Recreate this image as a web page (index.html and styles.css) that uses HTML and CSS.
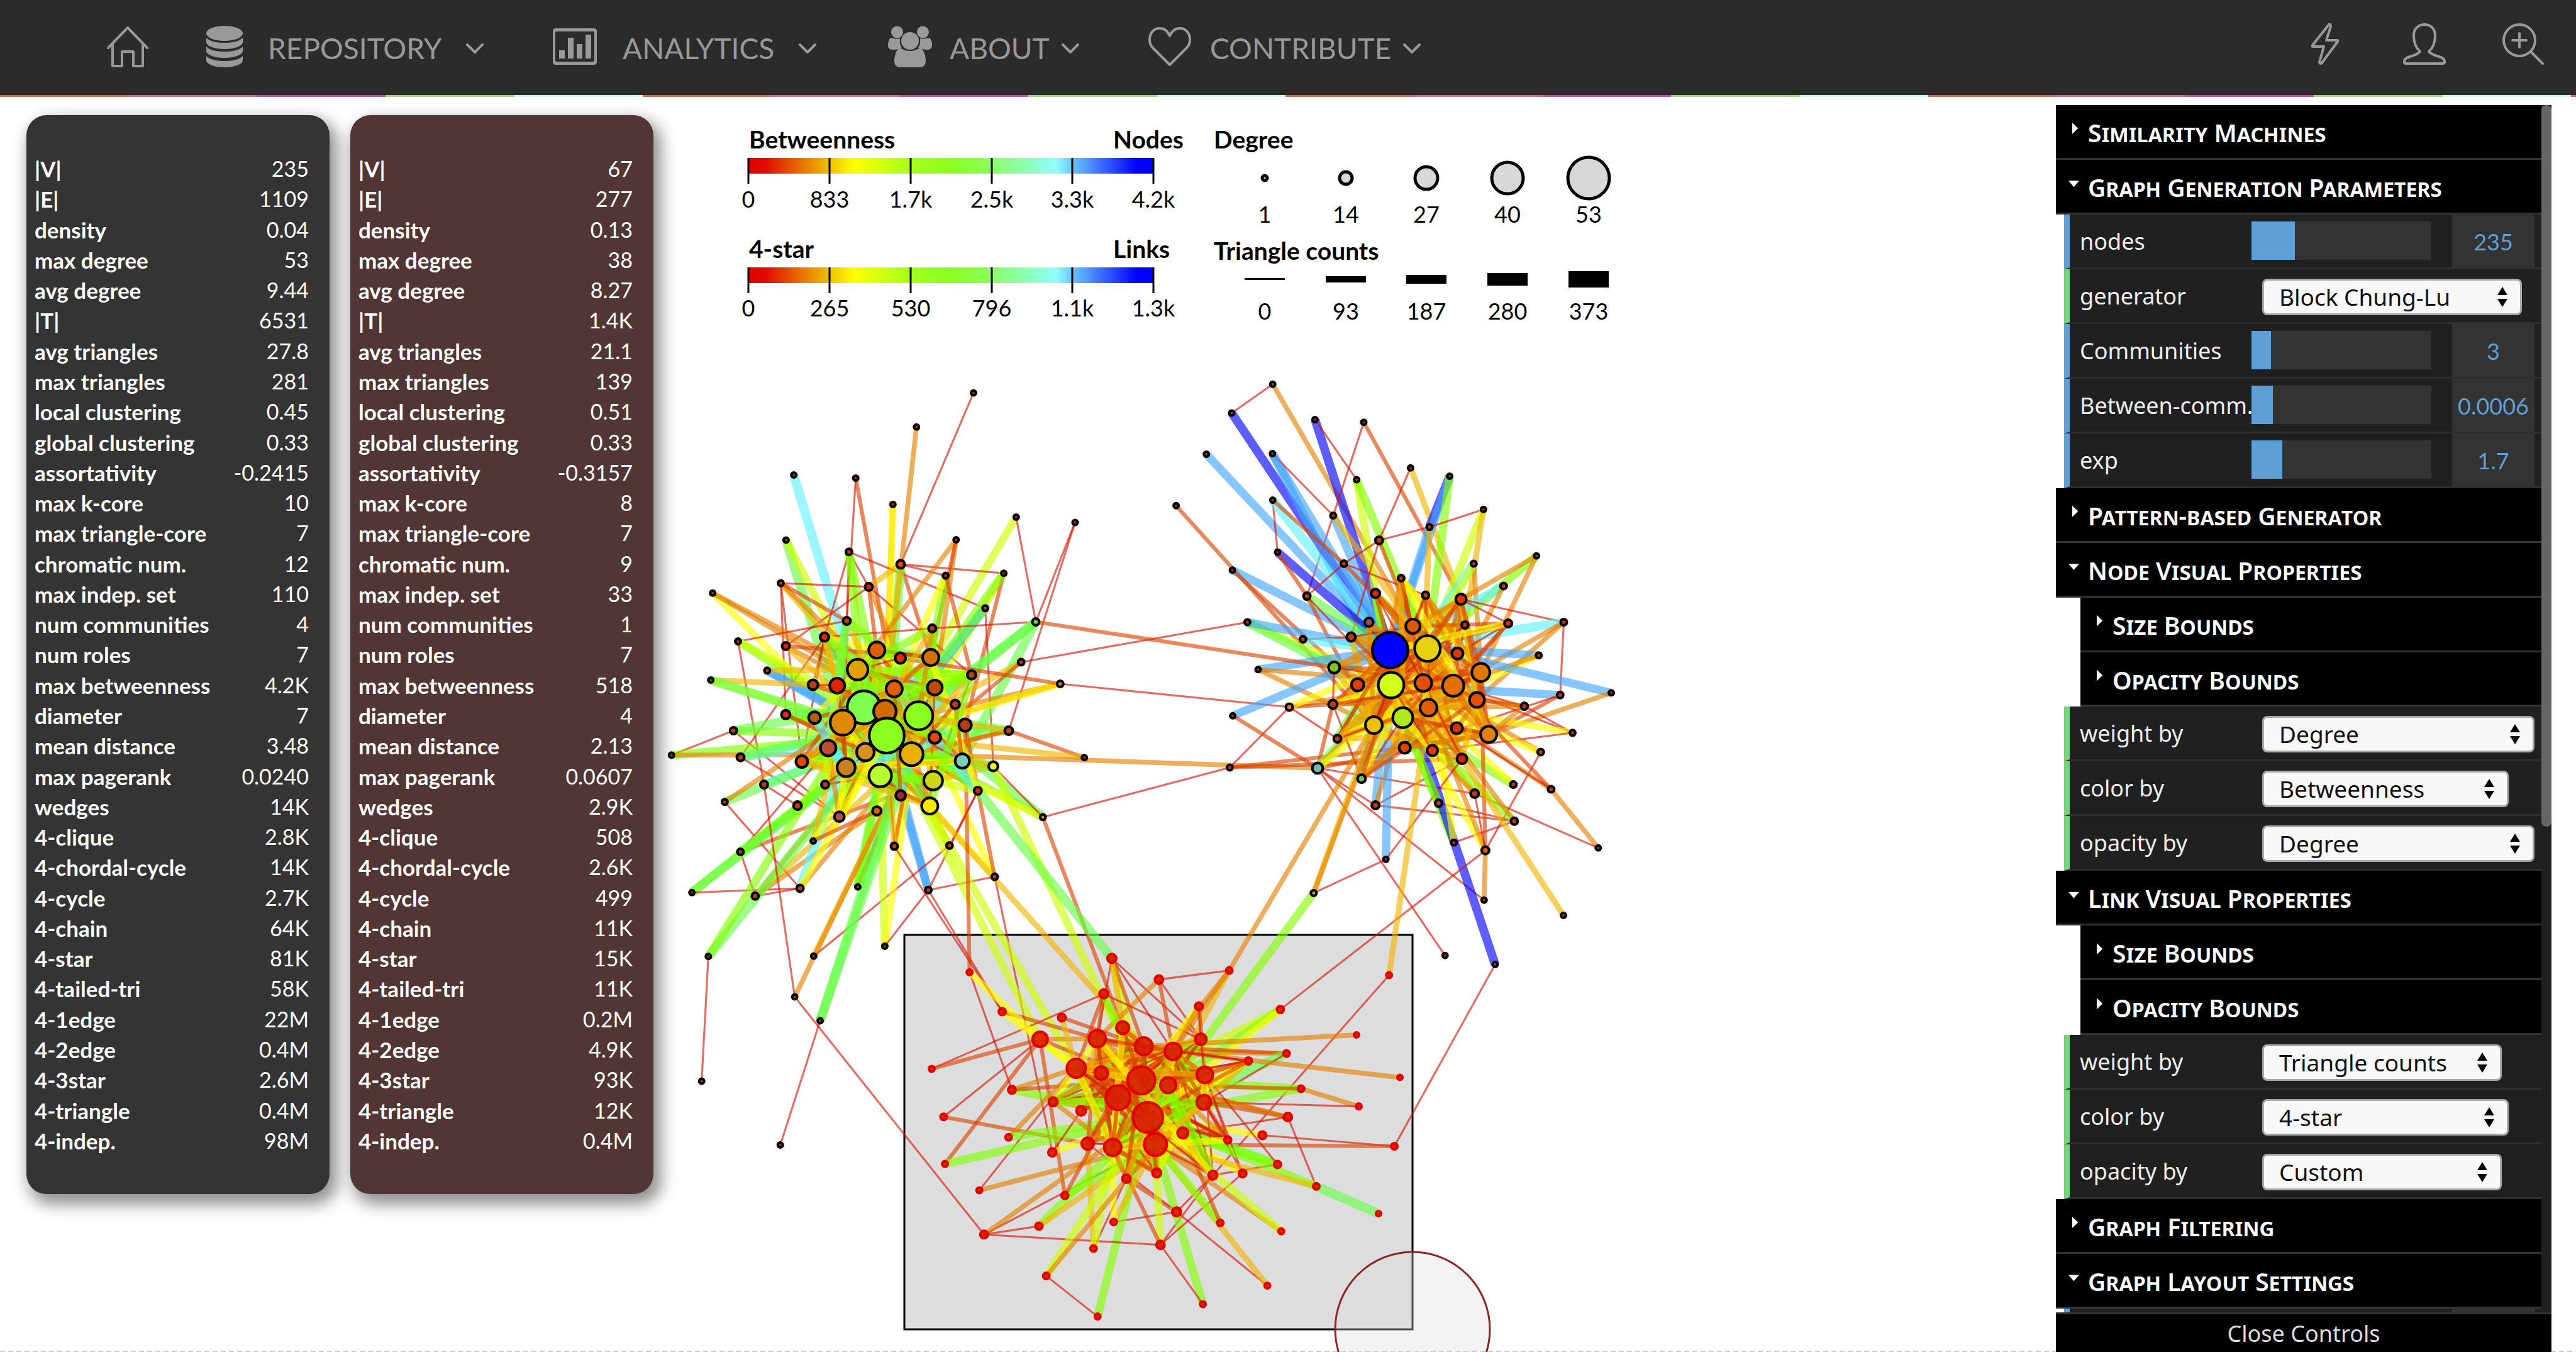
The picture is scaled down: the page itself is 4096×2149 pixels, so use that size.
FILE: index.html
```html
<!DOCTYPE html>
<html lang="en">
<head>
<meta charset="utf-8">
<title>Graph Generation and Analytics</title>
<link rel="stylesheet" href="styles.css">
</head>
<body>
<header class="topbar">
  <nav class="menu" aria-label="Main">
    <a class="menu-item" href="#home" aria-label="Home">
      <svg class="icon line" width="66" height="68" viewBox="0 0 66 68"><path d="M2 36 33 4l31 32M9 30v35h15V42h18v23h15V30"/></svg>
    </a>
    <a class="menu-item" href="#repository">
      <span class="icon-box"><svg class="icon solid" width="58" height="66" viewBox="0 0 58 66"><ellipse cx="29" cy="12" rx="29" ry="12"/><path d="M0 19q8 8 29 8t29-8v7c0 6-13 11-29 11S0 32 0 26zM0 33q8 8 29 8t29-8v7c0 6-13 11-29 11S0 46 0 40zM0 48q8 8 29 8t29-8v7c0 6-13 11-29 11S0 61 0 55z"/></svg></span>
      <span class="menu-text">REPOSITORY</span>
      <svg class="icon line chevron" width="30" height="20" viewBox="0 0 30 20"><path d="m3 4 12 12L27 4"/></svg>
    </a>
    <a class="menu-item wide" href="#analytics">
      <span class="icon-box"><svg class="icon solid" width="70" height="58" viewBox="0 0 70 58"><path fill-rule="evenodd" d="M5 0h60q5 0 5 5v48q0 5-5 5H5q-5 0-5-5V5q0-5 5-5zm1 5q-2 0-2 2v44q0 2 2 2h58q2 0 2-2V7q0-2-2-2z"/><path d="M10 35h9v13h-9zM24 15h9v33h-9zM38 25h9v23h-9zM52 10h9v38h-9z"/></svg></span>
      <span class="menu-text">ANALYTICS</span>
      <svg class="icon line chevron" width="30" height="20" viewBox="0 0 30 20"><path d="m3 4 12 12L27 4"/></svg>
    </a>
    <a class="menu-item tight" href="#about">
      <span class="icon-box"><svg class="icon solid" width="70" height="66" viewBox="0 0 70 66"><circle cx="14.500" cy="10" r="9.500"/><circle cx="55.500" cy="10" r="9.500"/><path d="M4 19q9 3 15 1-1 10 3 15-6 3-15 3-7 0-7-7 0-8 4-12zM66 19q-9 3-15 1 1 10-3 15 6 3 15 3 7 0 7-7 0-8-4-12z"/><circle cx="35" cy="24" r="14"/><path d="M19 35q16 10 32 0 8 4 9 20 0 11-9 11H19q-9 0-9-11 1-16 9-20z"/></svg></span>
      <span class="menu-text">ABOUT</span>
      <svg class="icon line chevron" width="30" height="20" viewBox="0 0 30 20"><path d="m3 4 12 12L27 4"/></svg>
    </a>
    <a class="menu-item tight" href="#contribute">
      <span class="icon-box"><svg class="icon line" width="68" height="64" viewBox="0 0 68 64"><path d="M34 15C30 6 24 3 18 3 9 3 2 10 2 21c0 6 2 10 5 13l27 27 27-27c3-3 5-7 5-13C66 10 59 3 50 3c-6 0-12 3-16 12z"/></svg></span>
      <span class="menu-text">CONTRIBUTE</span>
      <svg class="icon line chevron" width="30" height="20" viewBox="0 0 30 20"><path d="m3 4 12 12L27 4"/></svg>
    </a>
  </nav>
  <nav class="tools" aria-label="Tools">
    <a href="#activity" aria-label="Activity"><svg class="icon line" width="56" height="66" viewBox="0 0 56 66"><path d="M28 2 2 35q-1 2 1 2h17l-7 25q1 3 4 1l25-34q1-2-1-2H24l7-22q0-4-3-3z"/></svg></a>
    <a href="#account" aria-label="Account"><svg class="icon line" width="68" height="66" viewBox="0 0 68 66"><path d="M27 45c-8-7-10-16-10-26C17 8 25 2 34 2s17 6 17 17c0 10-2 19-10 26q3 4 16 8 9 3 9 7v2q0 2-3 2H5q-3 0-3-2v-2q0-4 9-7 13-4 16-8z"/></svg></a>
    <a href="#search" aria-label="Search"><svg class="icon line" width="66" height="66" viewBox="0 0 66 66"><circle cx="27" cy="27" r="25"/><path d="m45 45 19 19M27 16v22M16 27h22"/></svg></a>
  </nav>
</header>
<main class="workspace">
  <section class="stats">
    <table class="stat-card" aria-label="Whole graph"><tbody>
      <tr><th>|V|</th><td>235</td></tr><tr><th>|E|</th><td>1109</td></tr><tr><th>density</th><td>0.04</td></tr>
      <tr><th>max degree</th><td>53</td></tr><tr><th>avg degree</th><td>9.44</td></tr><tr><th>|T|</th><td>6531</td></tr>
      <tr><th>avg triangles</th><td>27.8</td></tr><tr><th>max triangles</th><td>281</td></tr><tr><th>local clustering</th><td>0.45</td></tr>
      <tr><th>global clustering</th><td>0.33</td></tr><tr><th>assortativity</th><td>-0.2415</td></tr><tr><th>max k-core</th><td>10</td></tr>
      <tr><th>max triangle-core</th><td>7</td></tr><tr><th>chromatic num.</th><td>12</td></tr><tr><th>max indep. set</th><td>110</td></tr>
      <tr><th>num communities</th><td>4</td></tr><tr><th>num roles</th><td>7</td></tr><tr><th>max betweenness</th><td>4.2K</td></tr>
      <tr><th>diameter</th><td>7</td></tr><tr><th>mean distance</th><td>3.48</td></tr><tr><th>max pagerank</th><td>0.0240</td></tr>
      <tr><th>wedges</th><td>14K</td></tr><tr><th>4-clique</th><td>2.8K</td></tr><tr><th>4-chordal-cycle</th><td>14K</td></tr>
      <tr><th>4-cycle</th><td>2.7K</td></tr><tr><th>4-chain</th><td>64K</td></tr><tr><th>4-star</th><td>81K</td></tr>
      <tr><th>4-tailed-tri</th><td>58K</td></tr><tr><th>4-1edge</th><td>22M</td></tr><tr><th>4-2edge</th><td>0.4M</td></tr>
      <tr><th>4-3star</th><td>2.6M</td></tr><tr><th>4-triangle</th><td>0.4M</td></tr><tr><th>4-indep.</th><td>98M</td></tr>
    </tbody></table>
    <table class="stat-card selected" aria-label="Selected subgraph"><tbody>
      <tr><th>|V|</th><td>67</td></tr><tr><th>|E|</th><td>277</td></tr><tr><th>density</th><td>0.13</td></tr>
      <tr><th>max degree</th><td>38</td></tr><tr><th>avg degree</th><td>8.27</td></tr><tr><th>|T|</th><td>1.4K</td></tr>
      <tr><th>avg triangles</th><td>21.1</td></tr><tr><th>max triangles</th><td>139</td></tr><tr><th>local clustering</th><td>0.51</td></tr>
      <tr><th>global clustering</th><td>0.33</td></tr><tr><th>assortativity</th><td>-0.3157</td></tr><tr><th>max k-core</th><td>8</td></tr>
      <tr><th>max triangle-core</th><td>7</td></tr><tr><th>chromatic num.</th><td>9</td></tr><tr><th>max indep. set</th><td>33</td></tr>
      <tr><th>num communities</th><td>1</td></tr><tr><th>num roles</th><td>7</td></tr><tr><th>max betweenness</th><td>518</td></tr>
      <tr><th>diameter</th><td>4</td></tr><tr><th>mean distance</th><td>2.13</td></tr><tr><th>max pagerank</th><td>0.0607</td></tr>
      <tr><th>wedges</th><td>2.9K</td></tr><tr><th>4-clique</th><td>508</td></tr><tr><th>4-chordal-cycle</th><td>2.6K</td></tr>
      <tr><th>4-cycle</th><td>499</td></tr><tr><th>4-chain</th><td>11K</td></tr><tr><th>4-star</th><td>15K</td></tr>
      <tr><th>4-tailed-tri</th><td>11K</td></tr><tr><th>4-1edge</th><td>0.2M</td></tr><tr><th>4-2edge</th><td>4.9K</td></tr>
      <tr><th>4-3star</th><td>93K</td></tr><tr><th>4-triangle</th><td>12K</td></tr><tr><th>4-indep.</th><td>0.4M</td></tr>
    </tbody></table>
  </section>

  <svg class="plot" viewBox="1040 154 2229 1995" preserveAspectRatio="xMidYMin meet" role="img" aria-label="Node-link diagram with legends">
    <defs>
      <linearGradient id="scale">
        <stop offset="0" stop-color="#e00000"/><stop offset=".04" stop-color="#e00a00"/>
        <stop offset=".2" stop-color="#eec000"/><stop offset=".26" stop-color="#ffff00"/><stop offset=".4" stop-color="#a4ff1c"/>
        <stop offset=".5" stop-color="#8cff22"/><stop offset=".58" stop-color="#8cff50"/><stop offset=".76" stop-color="#90ffff"/>
        <stop offset=".8" stop-color="#6cc4ff"/><stop offset=".96" stop-color="#0000ff"/><stop offset="1" stop-color="#0000ff"/>
      </linearGradient>
    </defs>
    <g class="legend">
      <text class="title" x="1191" y="236">Betweenness</text><text class="title" x="1770" y="236">Nodes</text>
      <rect x="1190" y="251" width="644" height="25" fill="url(#scale)"/>
      <path class="ticks" d="M1190 251v41M1319 251v41M1448 251v41M1577 251v41M1705 251v41M1834 251v41"/>
      <g class="mid"><text x="1190" y="330">0</text><text x="1319" y="330">833</text><text x="1448" y="330">1.7k</text><text x="1577" y="330">2.5k</text><text x="1705" y="330">3.3k</text><text x="1834" y="330">4.2k</text></g>
      <text class="title" x="1191" y="410">4-star</text><text class="title" x="1770" y="410">Links</text>
      <rect x="1190" y="425" width="644" height="25" fill="url(#scale)"/>
      <path class="ticks" d="M1190 425v41M1319 425v41M1448 425v41M1577 425v41M1705 425v41M1834 425v41"/>
      <g class="mid"><text x="1190" y="503">0</text><text x="1319" y="503">265</text><text x="1448" y="503">530</text><text x="1577" y="503">796</text><text x="1705" y="503">1.1k</text><text x="1834" y="503">1.3k</text></g>
      <text class="title" x="1930" y="236">Degree</text>
      <g class="sizes"><circle cx="2011" cy="283" r="4"/><circle cx="2140" cy="283" r="10"/><circle cx="2268" cy="283" r="18"/><circle cx="2397" cy="283" r="25"/><circle cx="2526" cy="283" r="33"/></g>
      <g class="mid"><text x="2011" y="354">1</text><text x="2140" y="354">14</text><text x="2268" y="354">27</text><text x="2397" y="354">40</text><text x="2526" y="354">53</text></g>
      <text class="title" x="1930" y="413">Triangle counts</text>
      <path d="M1979 442h64v3h-64zM2108 439h64v10h-64zM2236 437h64v14h-64zM2365 434h64v20h-64zM2494 431h64v26h-64z"/>
      <g class="mid"><text x="2011" y="508">0</text><text x="2140" y="508">93</text><text x="2268" y="508">187</text><text x="2397" y="508">280</text><text x="2526" y="508">373</text></g>
    </g>
    <rect class="selection" x="1438" y="1486" width="808" height="627"/>
    <g id="links"></g>
    <g id="nodes"></g>
    <circle class="brush" cx="2246" cy="2113" r="123"/>
  </svg>

  <aside class="controls">
    <div class="scroller">
      <div class="rows">
        <button class="folder">Similarity Machines</button>
        <button class="folder open">Graph Generation Parameters</button>
        <div class="row number"><label for="n1">nodes</label><input class="slider" id="n1" type="range" value="24" style="--fill:24%"><input class="value" aria-label="nodes value" type="text" value="235"></div>
        <div class="row choice"><label for="s1">generator</label><select id="s1" class="w-generator"><option>Block Chung-Lu</option></select></div>
        <div class="row number"><label for="n2">Communities</label><input class="slider" id="n2" type="range" value="11" style="--fill:11%"><input class="value" aria-label="Communities value" type="text" value="3"></div>
        <div class="row number"><label for="n3">Between-comm.</label><input class="slider" id="n3" type="range" value="12" style="--fill:12%"><input class="value" aria-label="Between-community value" type="text" value="0.0006"></div>
        <div class="row number"><label for="n4">exp</label><input class="slider" id="n4" type="range" value="17" style="--fill:17%"><input class="value" aria-label="exp value" type="text" value="1.7"></div>
        <button class="folder">Pattern-based Generator</button>
        <button class="folder open">Node Visual Properties</button>
        <button class="folder sub">Size Bounds</button>
        <button class="folder sub">Opacity Bounds</button>
        <div class="row choice"><label for="s2">weight by</label><select id="s2" class="w-long"><option>Degree</option></select></div>
        <div class="row choice"><label for="s3">color by</label><select id="s3" class="w-color"><option>Betweenness</option></select></div>
        <div class="row choice"><label for="s4">opacity by</label><select id="s4" class="w-long"><option>Degree</option></select></div>
        <button class="folder open">Link Visual Properties</button>
        <button class="folder sub">Size Bounds</button>
        <button class="folder sub">Opacity Bounds</button>
        <div class="row choice"><label for="s5">weight by</label><select id="s5" class="w-short"><option>Triangle counts</option></select></div>
        <div class="row choice"><label for="s6">color by</label><select id="s6" class="w-color"><option>4-star</option></select></div>
        <div class="row choice"><label for="s7">opacity by</label><select id="s7" class="w-short"><option>Custom</option></select></div>
        <button class="folder">Graph Filtering</button>
        <button class="folder open">Graph Layout Settings</button>
      </div>
      <div class="row number peek"><span class="peek-value"></span></div>
      <div class="thumb"></div>
    </div>
    <button class="close">Close Controls</button>
  </aside>
</main>
<script src="graph.js"></script>
</body>
</html>
```
FILE: styles.css
```css
* { box-sizing: border-box; }
body { margin: 0; background: #fff; font-family: Lato, "Liberation Sans", sans-serif; height: 100vh; display: flex; flex-direction: column; overflow: hidden; }
button, input, select { font: inherit; margin: 0; border: 0; border-radius: 0; }
a { color: inherit; text-decoration: none; }

.topbar { flex: none; height: 154px; background: #2b2b2b; color: #999; display: flex; justify-content: space-between; padding: 0 51px 0 170px; position: relative; }
.topbar::after { content: ""; position: absolute; left: 0; right: 0; bottom: 0; height: 3px; background: repeating-linear-gradient(90deg, #e8604c 0 204px, #e3608a 204px 409px, #e03ca4 409px 613px, #a0dc60 613px 818px, #d0ffe8 818px 1022px); }
.menu { display: grid; grid-template-columns: 158px 551px 533px 414px auto; }
.menu-item { display: flex; align-items: center; height: 148px; }
.icon-box { width: 98px; display: flex; flex: none; }
.wide .icon-box { width: 111px; }
.menu-text { font-size: 46px; line-height: 56px; padding-top: 6px; }
.icon { display: block; flex: none; }
.icon.line { fill: none; stroke: #999; stroke-width: 4; stroke-linejoin: round; stroke-linecap: round; }
.icon.solid { fill: #999; }
.chevron { margin: 6px 0 0 38px; }
.tight .chevron { margin-left: 18px; }
.tools { display: flex; gap: 90px; height: 140px; align-items: center; }

.workspace { flex: 1; min-height: 0; display: flex; background: repeating-linear-gradient(90deg, #ccc 0 8px, #fff 8px 13px) left bottom / 100% 2px no-repeat; }
.stats { flex: none; width: 1040px; padding: 29px 0 0 42px; display: flex; gap: 33px; align-items: flex-start; }
.stat-card { display: block; width: 482px; padding: 61px 33px 61px 13px; border-radius: 32px; background: #343434; color: #fff; font-size: 34px; border-spacing: 0; box-shadow: 8px 12px 26px 4px rgba(0, 0, 0, .45); }
.stat-card.selected { background: #523535; }
.stat-card tbody { display: grid; grid-auto-rows: 1fr; height: 1593px; }
.stat-card tr { display: flex; justify-content: space-between; align-items: center; }
.stat-card th, .stat-card td { padding: 0; line-height: 40px; white-space: nowrap; }
.stat-card th { font-weight: 700; font-size: 35px; }
.stat-card td { font-weight: 400; }

.plot { flex: 1; min-width: 0; height: 100%; }
.legend { font-size: 36px; fill: #000; }
.legend .title { font-weight: 700; font-size: 39px; }
.legend .mid { text-anchor: middle; }
.ticks { stroke: #000; stroke-width: 3; fill: none; }
.sizes { fill: #d8d8d8; stroke: #000; stroke-width: 5; }
.selection { fill: #ddd; stroke: #000; stroke-width: 3; }
.brush { fill: rgba(220, 220, 220, .35); stroke: #8c2626; stroke-width: 3; }
#links line { stroke-opacity: .63; }

.controls { flex: none; width: 788px; margin: 13px 39px 0 0; display: flex; flex-direction: column; font-family: "Noto Sans", "DejaVu Sans", sans-serif; font-size: 36px; color: #eee; }
.scroller { flex: 1; min-height: 0; position: relative; padding-right: 16px; overflow: hidden; background: linear-gradient(#202020, #202020) right / 16px 100% no-repeat; }
.thumb { position: absolute; right: 0; top: 0; width: 16px; height: 1147px; border-radius: 8px; background: #666; }
.rows { display: grid; grid-auto-rows: 1fr; height: 1913px; }
.folder { display: flex; align-items: center; gap: 14px; background: #000; border-bottom: 3px solid #333; padding: 4px 0 0 20px; color: #fff; font-size: 39px; line-height: 56px; font-weight: 600; font-variant-caps: small-caps; text-align: left; }
.folder::before { content: ""; flex: none; width: 17px; height: 18px; background: #fff; clip-path: polygon(35% 0, 35% 100%, 90% 50%); margin-bottom: 14px; }
.folder.open::before { clip-path: polygon(0 30%, 100% 30%, 50% 85%); }
.folder.sub { margin-left: 39px; padding-left: 20px; }
.row { margin-left: 13px; border-left: 9px solid #5f9fd6; background: #202020; border-bottom: 3px solid #2e2e2e; display: flex; align-items: center; padding-left: 16px; overflow: hidden; }
.row.choice { border-left-color: #74d674; }
.row label { flex: none; width: 273px; white-space: nowrap; overflow: hidden; line-height: 48px; padding-top: 2px; }
.slider { appearance: none; flex: none; width: 286px; height: 61px; background: linear-gradient(90deg, #5f9fd6 var(--fill), #333 var(--fill)); }
.slider::-webkit-slider-thumb { appearance: none; width: 1px; height: 61px; background: transparent; }
.value { width: 131px; height: 84px; margin-left: 33px; padding: 2px 0 0; background: #333; color: #5f9fd6; text-align: center; font-family: Lato, sans-serif; font-size: 36px; }
.choice select { appearance: none; margin: 4px 0 0 17px; height: 58px; border: 3px solid #a8a8a8; border-radius: 8px; color: #111; font-size: 37px; padding: 0 0 2px 24px; background: #f8f8f8 url("data:image/svg+xml,%3Csvg xmlns='http://www.w3.org/2000/svg' width='16' height='32'%3E%3Cpath d='M8 0l8 13H0zM8 32l8-13H0z'/%3E%3C/svg%3E") right 20px center no-repeat; }
.w-generator { width: 413px; }
.w-long { width: 433px; }
.w-color { width: 392px; }
.w-short { width: 381px; }
.peek { height: 87px; align-items: stretch; }
.peek-value { width: 131px; margin-left: 592px; background: #333; }
.close { flex: none; height: 63px; background: #000; border-top: 3px solid #333; color: #ddd; font-size: 36px; line-height: 48px; padding: 2px 0 0; }
```
FILE: graph.js
```javascript
// Node records: "x y [radius] [fill]", in the local frame of the group they belong to.
const SCALE = 4096 / 5304;
const groups = [
  { id: 'A', ox: 1350, oy: 750, kx: 0.6378, ky: 0.6378, nodes: `1026 92;842 202;446 357;646 367;766 452;1164 493;1354 510;421 567;624 605 13 #d83000;791 645 16 #e04800;970 566;936 682 12;1124 674;404 706 12;688 718 15 #e02000;184 738;1064 787 12;1227 831 14 #80c830;617 828 15;893 852 15 #b04020;545 880 17 #e02800;266 894 12;420 909 15 #e02800;714 922 29 #e06000;790 948 20 #e03000;888 946 29 #d07000;652 985 36 #e0a000;1180 961 13;1306 1031 13 #e08000;1020 1002 17;360 988 12;178 1019 11;508 1034 19;586 1037 27 #e02400;770 1047 29 #e06000;901 1043 27 #c04800;967 1097 17;672 1107 56 #80ff50;740 1120 39 #d06c00;849 1134 48 #8cff22;604 1156 43 #e08800;513 1140 22 #b06000;420 1130 17 #e02800;251 1182 14;999 1164 23;1140 1182 16;746 1198 59 #8cff22;901 1204 22 #e04800;557 1238 28 #b85030;677 1251 31 #d89020;826 1258 40 #e6b000;51 1261 11;274 1268 15;472 1282 22 #e04800;990 1280 26 #78d0b8;1090 1297 18 #f0ff00;615 1301 32 #c88020;725 1327 39 #b8ff30;896 1343 33 #ccd814;350 1356 15;547 1356 15;791 1391 19 #a02838;1040 1376 15 #d82800;1384 1269 11;223 1412 12;458 1424 16;593 1460 19 #b05040;714 1441 17 #d86010;885 1425 29 #ffe800;1250 1461 12 #e08000` },
  { id: 'A', ox: 1350, oy: 1650, kx: 0.574, ky: 0.7226, nodes: `565 112;304 143 13;856 127 14;1054 125 13;130 259;357 269 14;518 247 14;725 243;978 252 13;1216 214 13;189 441;567 440;822 412;499 556;590 624;165 796;447 978` },
  { id: 'B', ox: 2350, oy: 750, kx: 0.6696, ky: 0.6378, nodes: `404 64;278 157;534 178;684 187;200 290;403 288;662 372;828 334;948 361;107 456;404 438;590 488 12;1052 468;886 525 12;731 568 15;419 606;280 664;623 643 13;1022 643 12;1215 618;799 690 13;720 739 17 #e02800;874 745 14;983 758 20 #e03000;509 748 14;1114 715 13;326 832 12;700 832 17 #905060;835 845 26 #e05800;995 841 14;1128 836 15 #e02800;1299 832 13;645 880 17;497 887 13;765 922 60 #0000ff;880 917 44 #e6d010;972 933 21 #e03800;1222 939 12;593 978 21 #78c820;359 985 11;1044 994 32 #e07800;665 1034 23 #e04000;768 1035 44 #d0ff18;867 1028 30 #e05000;959 1037 37 #e07000;1445 1060 11;1288 1067 13;455 1106 14 #e08000;589 1097 17;883 1108 30 #e05c00;1032 1083 27 #e05000;281 1134 11;1178 1103 14;804 1140 35 #b0e820;715 1164 30 #f0c000;970 1174 21 #e03000;1068 1194 29 #e08000;603 1208 15;1326 1189 12;1228 1251 13;810 1237 21 #e04000;895 1246 20 #e03800;272 1301 12;986 1273 19 #e02000;542 1303 20 #78b8b0;677 1337 16 #70c850;1144 1356 13;1260 1371 13;720 1423 15;1025 1385 16;914 1416 14;1147 1474 14;961 1543 12` },
  { id: 'B', ox: 2350, oy: 1600, kx: 0.6696, ky: 0.3333, nodes: `1058 451 15 #e06000;752 507;530 714 12 #a0d800;1405 436;1054 758;1298 852;934 1100;1088 1156` },
  { id: 'C', ox: 2200, oy: 1850, kx: 0.6378, ky: 0.595, nodes: `140 206 17;292 279 16;519 248 13;114 329 17;421 372 15;684 383 14;1035 264 12;175 446 23;93 484 30;243 510 31;338 528 30;427 486 21;930 471 11;704 535 13;581 561 14;440 609 29;25 586 33;106 603 24;235 628 47;322 645 28;1070 618 11;160 688 42;751 657 13;437 704 26;41 733 18;937 718 12;708 755 16;256 756 51;369 810 20;626 818 15;514 834 14;1052 856 13;62 847 22;143 860 30;281 850 39;675 919 14;562 950 15;466 956 17;285 948 17;187 968 16;800 995 13;1001 1089 11;349 1083 17;146 1118 13;490 1121 13;687 1150 12;81 1210 13;297 1197 16;642 1338 12;434 1402 12;94 1445 12` },
  { id: 'C', ox: 1350, oy: 1650, kx: 0.574, ky: 0.7226, nodes: `1126 486 12;1243 598 14;1457 615 15;1379 677 27;990 761 12;1278 821 15;1426 855 17;1033 898 13;1266 956 13;1423 999 16;1038 1032 12;1161 1107 12;1468 1122 14;1375 1209 14;1178 1233 15;1401 1351 13` }
];

// Link classes: [stroke, width]
const kinds = {
  R: ['#d41404', 4], O: ['#db4200', 8], a: ['#e28000', 10], g: ['#f0b400', 12], y: ['#ffff00', 14],
  l: ['#ceff00', 16], n: ['#82ff02', 17], m: ['#66ff46', 19], c: ['#60f0ff', 19], s: ['#42a4ff', 17], b: ['#0000ff', 18]
};

const links = {
  A: `0-9R 1-38a 2-37c 3-18R 3-34O 4-38g 4-46y 5-46l 5-17R 6-17R 6-45R 7-40m 7-46l 8-18R 8-20R 8-16R 8-14R 8-37n 8-46n 14-13R 14-9g 14-29R 14-22R 14-46O 14-47a 9-12R 9-11R 9-25O 9-46m 9-38g 10-35a 10-26a 10-25O 11-25n 11-49y 11-29O 12-39l 12-44O 12-46n 13-26g 13-39a 13-18O 13-42R 13-53R 15-26a 15-40y 15-39a 16-46s 16-55R 16-49m 17-19R 17-46m 17-39m 17-54m 18-21R 20-19R 20-32R 20-53R 20-52R 20-23y 21-46n 21-37l 21-59R 22-25O 22-39a 22-46g 27-46g 27-50O 28-46a 28-39a 28-53y 28-24O 30-46s 30-50s 30-26g 31-33g 31-40l 31-46m 43-46n 43-51R 43-66R 43-37m 51-46n 51-50a 52-46c 52-39m 52-66R 45-46m 45-37m 45-50O 63-45O 63-46g 50-B64a 59-46c 59-65R 64-46m 64-40a 64-76R 69-46n 69-39m 69-50y 69-55R 69-C7O 71-46y 71-37R 71-58O 71-75R 71-39m 74-46n 74-39m 74-76R 75-46a 75-50g 75-67a 75-76R 76-37c 76-50a 76-46y 77-46m 77-39m 77-50O 77-57n 78-46s 78-61s 78-79R 78-C52R 79-68y 79-39y 79-44O 79-C60R 80-46m 80-37n 80-85R 81-50g 81-73R 82-57l 82-39y 82-78R 78-62R 83-50a 83-59R 83-C65R 84-39m 84-50m 84-86R 70-40g 70-46y 70-67O 72-50y 72-39O 72-38R 72-46g 73-68g 73-62R 73-46l 46-C54l 55-C18l 68-C9g 46-C16l 39-C0m 44-C51O 72-C52R`,
  B: `0-1R 0-28a 1-34b 2-34b 2-6R 3-11R 3-23O 11-24R 11-34s 11-28g 4-34s 5-34s 5-11R 5-42s 6-42l 6-35n 7-14R 7-23g 8-13b 8-34s 8-35n 9-54O 10-15R 10-34c 10-17O 15-34b 15-24O 16-34s 16-41O 12-13R 13-14R 12-35l 12-29g 13-34s 13-43g 17-14R 17-34s 17-24R 17-22R 17-35O 14-32R 14-28O 18-42c 18-40a 18-35l 19-35n 19-23a 19-40a 25-34c 25-44a 20-35n 21-42n 22-49O 23-31R 23-36O 23-30R 24-34m 24-54O 24-42R 26-42l 26-38m 26-34s 26-A27R 31-34c 31-46R 31-44a 31-50a 30-35a 30-36R 30-28O 37-35s 37-49y 37-44a 33-32R 33-34c 39-34s 39-43a 39-54a 45-35s 45-56a 46-42s 46-56O 46-60R 47-43a 47-48O 47-A28R 47-62R 47-57R 47-35y 51-34s 51-64O 52-44R 52-58R 58-44R 58-49y 58-61R 59-43a 59-49y 59-73R 57-54y 57-34m 62-60O 62-63O 62-A69R 64-56O 64-48O 64-42m 64-35a 64-43y 64-68R 64-77R 64-79R 64-69R 48-65R 65-54a 65-34s 68-34s 68-63R 68-71R 68-53a 38-48R 38-A17O 66-53n 66-49y 67-49a 67-44O 67-55R 67-76a 69-76R 69-42g 69-61a 71-70R 71-72R 71-53n 71-49a 72-53n 34-80b 72-35y 73-42y 73-49a 73-40O 73-69R 73-77a 73-C5R 74-34s 74-75R 74-63R 75-54g 75-42a 75-C27n 54-C2a 49-C6g 78-49g 70-53n 80-C31R`,
  C: `0-18l 0-9O 0-11R 0-10R 0-8R 0-7g 1-2R 1-10O 1-11R 1-8a 2-18a 2-19g 2-10a 3-16O 3-8O 3-11R 3-18n 4-11R 4-18y 4-10a 4-15O 5-18l 5-19n 5-27y 6-37R 12-9a 13-10a 13-9O 13-27m 13-23R 14-19g 14-27y 20-10a 22-18n 22-27n 22-19O 22-25a 25-23R 26-19O 26-23O 26-18a 26-40R 26-28R 29-31R 29-27y 30-15R 30-27a 31-34O 35-27m 35-28n 35-37R 35-15R 36-27y 36-23R 36-15R 37-15R 37-47R 40-27n 40-34g 40-41m 38-27y 38-33a 39-33R 39-46R 39-27n 42-37R 42-32R 42-43R 42-48R 42-39O 49-27n 49-47R 50-27n 50-66R 47-65R 47-34l 47-33O 47-36R 48-34g 45-34a 45-27l 44-34n 44-28O 43-34g 43-33y 46-32g 46-33l 55-3R 55-54O 54-16y 54-18O 54-8a 54-58R 54-61O 54-63O 52-16y 52-8O 53-16g 53-9O 56-16a 56-27n 56-18O 16-62R 57-27a 57-21R 58-32O 59-16a 59-27n 61-27n 62-34a 65-34R 65-27a 65-64R 64-27n 64-34g 60-27y 60-24R 63-34n 63-21O 66-27l 66-34a 51-56R 51-54y`
};

// Short links inside the dense cores: how many, centre, reach and colour mix of each cluster
const cores = {
  A: { count: 170, x: 1830, y: 1490, reach: 250, mix: 'nmagOOaynlgcOR' },
  B: { count: 200, x: 2930, y: 1405, reach: 240, mix: 'aaOOgaORgayO' },
  C: { count: 250, x: 2370, y: 2270, reach: 220, mix: 'OOROagOORyan' }
};

const table = { A: [], B: [], C: [] };
for (const g of groups) {
  for (const record of g.nodes.split(';')) {
    const [x, y, r, fill] = record.split(' ');
    table[g.id].push({
      cluster: g.id, x: g.ox + x * g.kx, y: g.oy + y * g.ky,
      r: (r || 11) * 0.645, fill: fill || (g.id === 'C' ? '#d61c00' : '#b83c18')
    });
  }
}

const NS = 'http://www.w3.org/2000/svg';
const px = v => (v * SCALE).toFixed(1);
function add(parent, name, attrs) {
  const el = document.createElementNS(NS, name);
  for (const key in attrs) el.setAttribute(key, attrs[key]);
  parent.appendChild(el);
}
const linkLayer = document.getElementById('links');
const nodeLayer = document.getElementById('nodes');
function drawLink(a, b, kind) {
  const [stroke, width] = kinds[kind];
  add(linkLayer, 'line', { x1: px(a.x), y1: px(a.y), x2: px(b.x), y2: px(b.y), stroke, 'stroke-width': px(width) });
}
function find(ref, home) {
  return /^[ABC]/.test(ref) ? table[ref[0]][+ref.slice(1)] : table[home][+ref];
}

let seed = 7;
const random = () => (seed = (seed * 16807) % 2147483647) / 2147483647;

for (const id in links) {
  for (const item of links[id].split(' ')) {
    const [from, rest] = item.split('-');
    drawLink(find(from, id), find(rest.slice(0, -1), id), rest.slice(-1));
  }
  const core = cores[id];
  const near = table[id].filter(n => Math.hypot(n.x - core.x, n.y - core.y) < core.reach);
  const hubs = near.filter(n => n.r > 15);
  for (let i = 0; i < core.count; i++) {
    const a = hubs[Math.floor(random() * hubs.length)];
    const b = near[Math.floor(random() * near.length)];
    if (a !== b) drawLink(a, b, core.mix[Math.floor(random() * core.mix.length)]);
  }
}
for (const id in table) {
  for (const n of table[id]) {
    const selected = id === 'C';
    add(nodeLayer, 'circle', {
      cx: px(n.x), cy: px(n.y), r: px(n.r - 2), fill: n.fill,
      'fill-opacity': selected ? 0.9 : 1, stroke: selected ? '#e00000' : '#000', 'stroke-width': px(5.5)
    });
  }
}
```
